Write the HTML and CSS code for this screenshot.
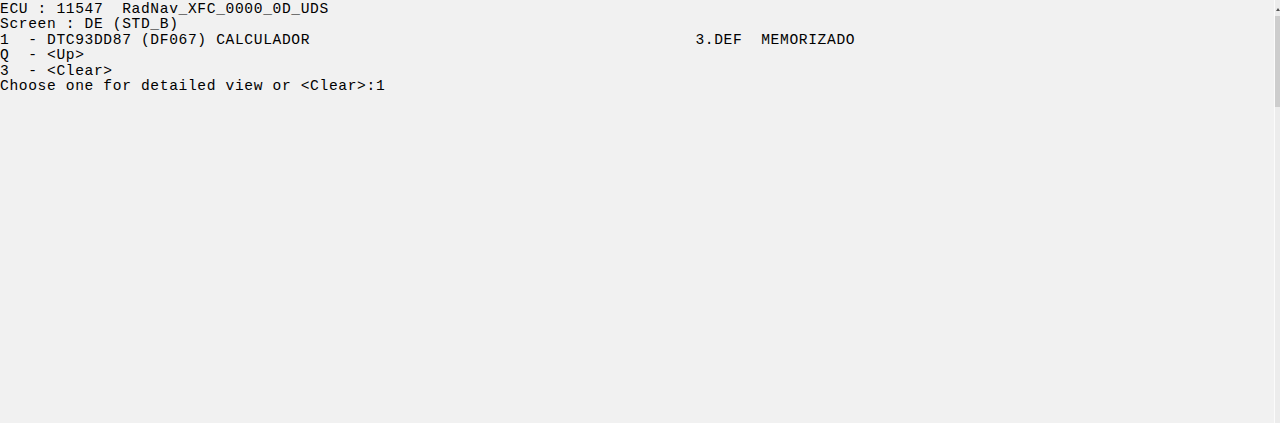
FILE: index.html
```html
<!DOCTYPE html>
<html>
<head>
<meta charset="utf-8">
<link rel="stylesheet" href="styles.css">
</head>
<body>
<div class="window">
<pre class="console">ECU : 11547  RadNav_XFC_0000_0D_UDS
Screen : DE (STD_B)
1  - DTC93DD87 (DF067) CALCULADOR                                         3.DEF  MEMORIZADO
Q  - &lt;Up&gt;
3  - &lt;Clear&gt;
Choose one for detailed view or &lt;Clear&gt;:1</pre>
<div class="scrollbar">
<div class="arrow"></div>
<div class="thumb"></div>
</div>
</div>
</body>
</html>
```
FILE: styles.css
```css
html, body {
  margin: 0;
  padding: 0;
  background: #f1f1f1;
}
.window {
  display: flex;
  width: 1280px;
  height: 423px;
  background: #f1f1f1;
}
.console {
  flex: 1;
  margin: 0;
  padding: 2px 0 0;
  font-family: "Liberation Mono", "DejaVu Sans Mono", monospace;
  font-size: 14.6px;
  letter-spacing: 0.64px;
  line-height: 15.45px;
  color: #000;
  white-space: pre;
}
.scrollbar {
  width: 5px;
  border-left: 1px solid #fbfbfb;
  background: #ececec;
  display: flex;
  flex-direction: column;
  align-items: stretch;
  padding-top: 8px;
}
.arrow {
  width: 0;
  height: 0;
  margin: 0 auto 5px;
  border-left: 2px solid transparent;
  border-right: 2px solid transparent;
  border-bottom: 3px solid #555;
}
.thumb {
  height: 91px;
  background: #cdcdcd;
}
```
